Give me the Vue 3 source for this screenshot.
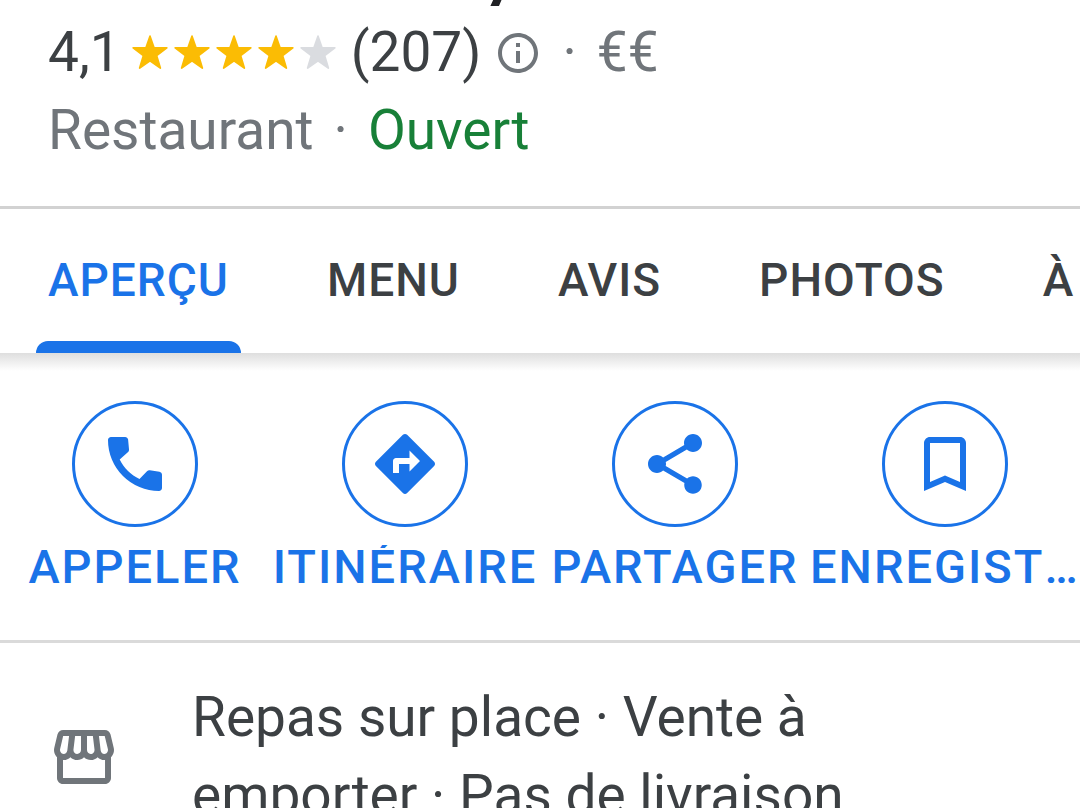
<script setup>
import { ref } from 'vue'

const tabs = ['APERÇU', 'MENU', 'AVIS', 'PHOTOS', 'À']
const activeTab = ref('APERÇU')

const actions = [
  {
    label: 'APPELER',
    path: 'M20 21A17 17 0 0 1 3 4c0-.55.45-1 1-1h4.7c.5 0 .9.36 1 .85l.3 3.2c.05.33-.06.69-.3.93L6.9 10.5c1.5 2.9 3.7 5.1 6.6 6.5l2.5-2.6c.24-.23.6-.35.94-.3l3.2.5c.5.1.86.5.86 1V20c0 .55-.45 1-1 1z',
  },
  {
    label: 'ITINÉRAIRE',
    path: 'M21.71 11.29l-9-9c-.39-.39-1.02-.39-1.41 0l-9 9c-.39.39-.39 1.02 0 1.41l9 9c.39.39 1.02.39 1.41 0l9-9c.39-.38.39-1.01 0-1.41zM13.5 14.5V12H10v3H8v-4c0-.55.45-1 1-1h4.5V7.5L17 11l-3.5 3.5z',
  },
  {
    label: 'PARTAGER',
    path: 'M18 16.08c-.76 0-1.44.3-1.96.77L8.91 12.7c.05-.23.09-.46.09-.7s-.04-.47-.09-.7l7.05-4.11c.54.5 1.25.81 2.04.81 1.66 0 3-1.34 3-3s-1.34-3-3-3-3 1.34-3 3c0 .24.04.47.09.7L8.04 9.81C7.5 9.31 6.79 9 6 9c-1.66 0-3 1.34-3 3s1.34 3 3 3c.79 0 1.5-.31 2.04-.81l7.12 4.16c-.05.21-.08.43-.08.65 0 1.61 1.31 2.92 2.92 2.92s2.92-1.31 2.92-2.92-1.31-2.92-2.92-2.92z',
  },
  {
    label: 'ENREGISTRER',
    path: 'M17 3H7c-1.1 0-2 .9-2 2v16l7-3 7 3V5c0-1.1-.9-2-2-2zm0 15l-5-2.18L7 18V5h10v13z',
  },
]
</script>

<template>
  <main class="page">
    <header class="summary">
      <h1 class="title">y</h1>
      <div class="line rating-line">
        <span>4,1</span>
        <span class="stars" role="img" aria-label="4,1 sur 5">
          <svg v-for="n in 5" :key="n" class="star" :class="{ empty: n > 4 }" viewBox="0 0 24 24">
            <path d="M12 2.4 14.3 9H21.6L15.8 13.5 17.9 20.6 12 16.5 6.1 20.6 8.2 13.5 2.4 9H9.7z" />
          </svg>
        </span>
        <span>(207)</span>
        <button class="info" type="button" aria-label="Informations">
          <svg viewBox="0 0 24 24">
            <path d="M11 7h2v2h-2zm0 4h2v6h-2zm1-9C6.48 2 2 6.48 2 12s4.48 10 10 10 10-4.48 10-10S17.52 2 12 2zm0 18c-4.41 0-8-3.59-8-8s3.59-8 8-8 8 3.59 8 8-3.59 8-8 8z" />
          </svg>
        </button>
        <span class="dot">·</span>
        <span class="muted">€€</span>
      </div>
      <div class="line">
        <span class="muted">Restaurant</span>
        <span class="dot">·</span>
        <span class="open">Ouvert</span>
      </div>
    </header>

    <nav class="tabs" role="tablist">
      <button
        v-for="tab in tabs"
        :key="tab"
        class="tab"
        :class="{ active: tab === activeTab }"
        type="button"
        role="tab"
        :aria-selected="tab === activeTab"
        @click="activeTab = tab"
      >{{ tab }}</button>
    </nav>

    <section class="actions">
      <button v-for="action in actions" :key="action.label" class="action" type="button">
        <span class="circle">
          <svg viewBox="0 0 24 24"><path :d="action.path" /></svg>
        </span>
        <span class="label">{{ action.label }}</span>
      </button>
    </section>

    <section class="services">
      <svg class="store" viewBox="0 0 24 24">
        <path d="M21.9 8.89l-1.05-4.37c-.22-.9-1-1.52-1.91-1.52H5.05c-.9 0-1.69.63-1.9 1.52L2.1 8.89c-.24 1.02-.02 2.06.62 2.88.08.11.19.19.28.29V19c0 1.1.9 2 2 2h14c1.1 0 2-.9 2-2v-6.94c.09-.09.2-.18.28-.28.64-.82.87-1.87.62-2.89zm-2.99-3.9l1.05 4.37c.1.42.01.84-.25 1.17-.14.18-.44.47-.94.47-.61 0-1.14-.49-1.21-1.14L16.98 5l1.93-.01zM13 5h1.96l.54 4.52c.05.39-.07.78-.33 1.07-.22.26-.54.41-.95.41-.67 0-1.22-.59-1.22-1.31V5zM8.49 9.52L9.04 5H11v4.69c0 .72-.55 1.31-1.29 1.31-.34 0-.65-.15-.89-.41-.25-.29-.37-.68-.33-1.07zm-4.45-.16L5.05 5h1.97l-.58 4.86c-.08.65-.6 1.14-1.21 1.14-.49 0-.8-.29-.93-.47-.27-.32-.36-.75-.26-1.17zM5 19v-6.03c.08.01.15.03.23.03.87 0 1.66-.36 2.24-.95.6.6 1.4.95 2.31.95.87 0 1.65-.36 2.23-.93.59.57 1.39.93 2.29.93.84 0 1.64-.35 2.24-.95.58.59 1.37.95 2.24.95.08 0 .15-.02.23-.03V19H5z" />
      </svg>
      <p class="services-text">Repas sur place · Vente à emporter · Pas de livraison</p>
    </section>
  </main>
</template>

<style>
body {
  overflow: hidden;
  background: #fff;
}
</style>

<style scoped>
.page {
  height: 100vh;
  overflow: hidden;
  background: #fff;
  color: #3c4043;
  font-family: Roboto, "Liberation Sans", sans-serif;
  font-size: 55px;
  line-height: 78px;
}
button {
  margin: 0;
  padding: 0;
  border: 0;
  background: none;
  color: inherit;
  font: inherit;
  cursor: pointer;
}
svg {
  display: block;
  fill: currentColor;
}
.summary {
  padding-bottom: 37px;
  border-bottom: 3px solid #d2d2d2;
}
.title {
  display: flex;
  align-items: flex-end;
  height: 6px;
  margin: 0 0 7px;
  padding-left: 480px;
  overflow: hidden;
  color: #202124;
  font-family: Lato, sans-serif;
  font-size: 72px;
  font-weight: 700;
  line-height: 72px;
}
.line {
  display: flex;
  align-items: center;
  padding: 0 48px;
  white-space: nowrap;
}
.stars {
  display: flex;
  margin: 0 12px 0 8px;
  padding-top: 2px;
}
.star {
  width: 42px;
  height: 42px;
  color: #fbbc04;
  stroke: currentColor;
  stroke-width: 1px;
  stroke-linejoin: round;
}
.star.empty {
  color: #dadce0;
}
.info {
  margin-left: 13px;
  padding-top: 2px;
  color: #70757a;
}
.info svg {
  width: 48px;
  height: 48px;
}
.muted {
  color: #70757a;
}
.dot {
  margin: 0 20px;
  color: #70757a;
}
.open {
  color: #188038;
}
.tabs {
  display: flex;
  gap: 74px;
  height: 144px;
  padding-left: 36px;
  overflow: hidden;
}
.tab {
  flex: none;
  padding: 0 12px 2px;
  font-size: 46px;
  font-weight: 500;
  letter-spacing: 1px;
  position: relative;
}
.tab.active {
  color: #1a73e8;
}
.tab.active::after {
  content: "";
  position: absolute;
  right: 0;
  bottom: 0;
  left: 0;
  height: 12px;
  border-radius: 12px 12px 0 0;
  background: #1a73e8;
}
.actions {
  display: grid;
  grid-template-columns: repeat(4, minmax(0, 1fr));
  padding: 48px 0 52px;
  border-bottom: 3px solid #dadada;
  background: linear-gradient(#dedede, #fff) top / 100% 18px no-repeat;
}
.action {
  display: flex;
  flex-direction: column;
  align-items: center;
  gap: 18px;
  color: #1a73e8;
}
.circle {
  display: grid;
  place-items: center;
  box-sizing: border-box;
  width: 126px;
  height: 126px;
  border: 3px solid #1a73e8;
  border-radius: 50%;
}
.circle svg {
  width: 72px;
  height: 72px;
}
.label {
  max-width: 100%;
  overflow: hidden;
  font-size: 47px;
  font-weight: 500;
  letter-spacing: 2px;
  line-height: 43px;
  text-overflow: ellipsis;
  white-space: nowrap;
}
.services {
  display: flex;
  align-items: flex-start;
  gap: 72px;
  padding: 35px 180px 0 48px;
}
.store {
  flex: none;
  width: 72px;
  height: 72px;
  margin-top: 43px;
  color: #70757a;
}
.services-text {
  margin: 0;
}
</style>
